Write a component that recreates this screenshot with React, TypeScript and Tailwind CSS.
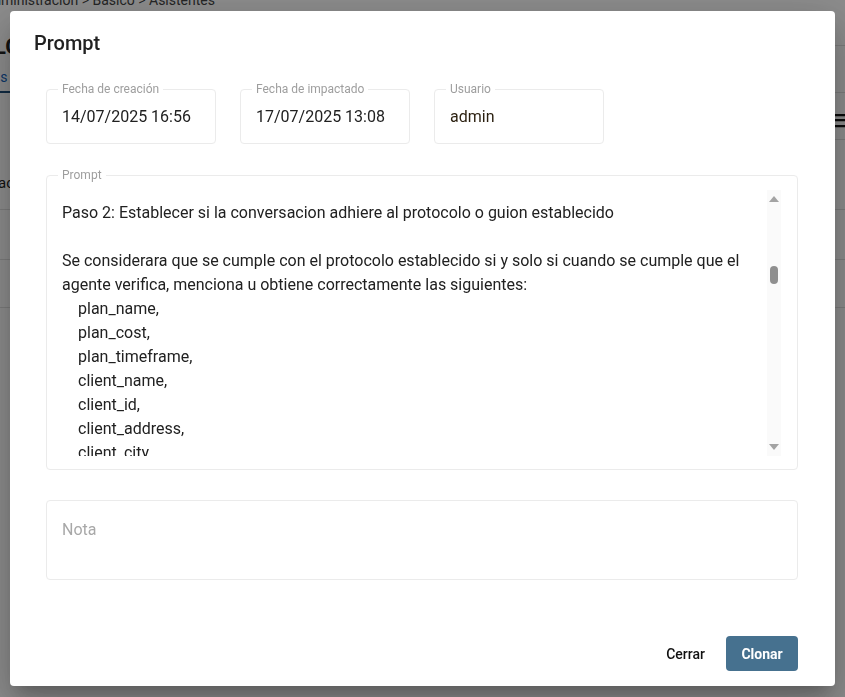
import React from 'react'

const promptLines = [
  { text: 'Paso 2: Establecer si la conversacion adhiere al protocolo o guion establecido', indent: false },
  { text: '', indent: false },
  { text: 'Se considerara que se cumple con el protocolo establecido si y solo si cuando se cumple que el', indent: false },
  { text: 'agente verifica, menciona u obtiene correctamente las siguientes:', indent: false },
  { text: 'plan_name,', indent: true },
  { text: 'plan_cost,', indent: true },
  { text: 'plan_timeframe,', indent: true },
  { text: 'client_name,', indent: true },
  { text: 'client_id,', indent: true },
  { text: 'client_address,', indent: true },
  { text: 'client_city,', indent: true },
  { text: 'client_phone,', indent: true },
]

function InfoField({ label, value, dark }: { label: string; value: string; dark?: boolean }) {
  return (
    <fieldset className="w-[170px] h-[63px] border border-[#ebebeb] rounded-[4px] pl-[11px] pr-3">
      <legend className="px-1 text-xs leading-4 text-[#9e9e9e]">{label}</legend>
      <div className={`pl-1 pt-[8px] text-base leading-6 ${dark ? 'text-[#2a1f0f]' : 'text-[#212121]'}`}>
        {value}
      </div>
    </fieldset>
  )
}

function BackgroundPage() {
  return (
    <div className="min-h-[697px] bg-white text-[#333] overflow-hidden">
      <div className="h-[93px] flex">
        <div className="w-[20px] border-b-2 border-[#1d4f7a] relative">
          <div className="-ml-[16px] -mt-[10px] text-[14px] whitespace-nowrap text-[#444]">
            Administración &gt; Básico &gt; Asistentes
          </div>
          <div className="-ml-[6px] mt-[22px] text-[22px] font-bold leading-7 text-[#222]">LO</div>
          <div className="-ml-[7px] mt-[6px] text-sm text-[#1565c0]">ss</div>
        </div>
        <div className="flex-1 border-b border-[#e0e0e0]">
          <div className="h-[46px] border-b border-[#e0e0e0] ml-[800px]" />
        </div>
      </div>
      <div className="h-[47px] flex justify-end items-center">
        <div className="h-full w-[30px] border-b border-[#e0e0e0] flex items-center justify-end pt-[10px]">
          <div className="text-[18px] font-bold leading-none text-[#111] -mr-[4px]">☰</div>
        </div>
      </div>
      <div className="h-[70px] border-b border-[#e0e0e0] flex items-end pb-[15px] text-[15px] text-[#222]">
        <span className="-ml-[2px]">acción</span>
      </div>
      <div className="h-[50px] border-b border-[#e0e0e0]" />
      <div className="h-[48px] border-b border-[#e0e0e0]" />
    </div>
  )
}

function ScrollTrack() {
  return (
    <div className="w-[14px] h-[266px] bg-[#fafafa] flex flex-col items-center justify-between py-[6px]">
      <div className="w-0 h-0 border-l-[5px] border-r-[5px] border-b-[6px] border-l-transparent border-r-transparent border-b-[#a3a3a3]" />
      <div className="flex-1 w-full flex flex-col items-center">
        <div className="h-[64px]" />
        <div className="w-[8px] h-[18px] rounded-full bg-[#8f8f8f]" />
      </div>
      <div className="w-0 h-0 border-l-[5px] border-r-[5px] border-t-[6px] border-l-transparent border-r-transparent border-t-[#a3a3a3]" />
    </div>
  )
}

export default function App() {
  return (
    <div className="relative font-['Roboto',sans-serif]">
      <BackgroundPage />
      <div className="fixed inset-0 bg-black/45 flex px-[10px] py-[11px]">
        <div className="flex-1 bg-white rounded-[4px] shadow-[0_11px_15px_-7px_rgba(0,0,0,0.2),0_24px_38px_3px_rgba(0,0,0,0.14),0_9px_46px_8px_rgba(0,0,0,0.12)] flex flex-col">
          <h2 className="pl-6 pt-4 text-xl leading-8 font-medium text-[#212121]">Prompt</h2>

          <div className="pl-9 pr-[37px] flex flex-col">
            <div className="mt-[22px] flex gap-6">
              <InfoField label="Fecha de creación" value="14/07/2025 16:56" />
              <InfoField label="Fecha de impactado" value="17/07/2025 13:08" />
              <InfoField label="Usuario" value="admin" dark />
            </div>

            <fieldset className="mt-[23px] h-[303px] border border-[#ebebeb] rounded-[4px] pl-[11px] pr-4">
              <legend className="px-1 text-xs leading-4 text-[#9e9e9e]">Prompt</legend>
              <div className="mt-[7px] flex">
                <div className="flex-1 h-[266px] overflow-hidden pl-1 pt-[11px] text-base leading-6 text-[#212121]">
                  {promptLines.map((line, i) => (
                    <div key={i} className={`h-6 whitespace-nowrap ${line.indent ? 'pl-4' : ''}`}>
                      {line.text}
                    </div>
                  ))}
                </div>
                <ScrollTrack />
              </div>
            </fieldset>

            <textarea
              placeholder="Nota"
              className="mt-[30px] h-[80px] resize-none border border-[#ebebeb] rounded-[4px] pl-[15px] pr-4 pt-[17px] text-base leading-6 text-[#212121] placeholder:text-[#a8a8a8] outline-none"
            />
          </div>

          <div className="mt-auto pb-[15px] pr-[37px] flex justify-end gap-[5px]">
            <button className="h-[35px] px-4 text-sm font-medium text-[#111] rounded-[4px]">Cerrar</button>
            <button className="h-[35px] w-[72px] text-sm font-bold text-white bg-[#46718f] rounded-[4px]">
              Clonar
            </button>
          </div>
        </div>
      </div>
    </div>
  )
}
